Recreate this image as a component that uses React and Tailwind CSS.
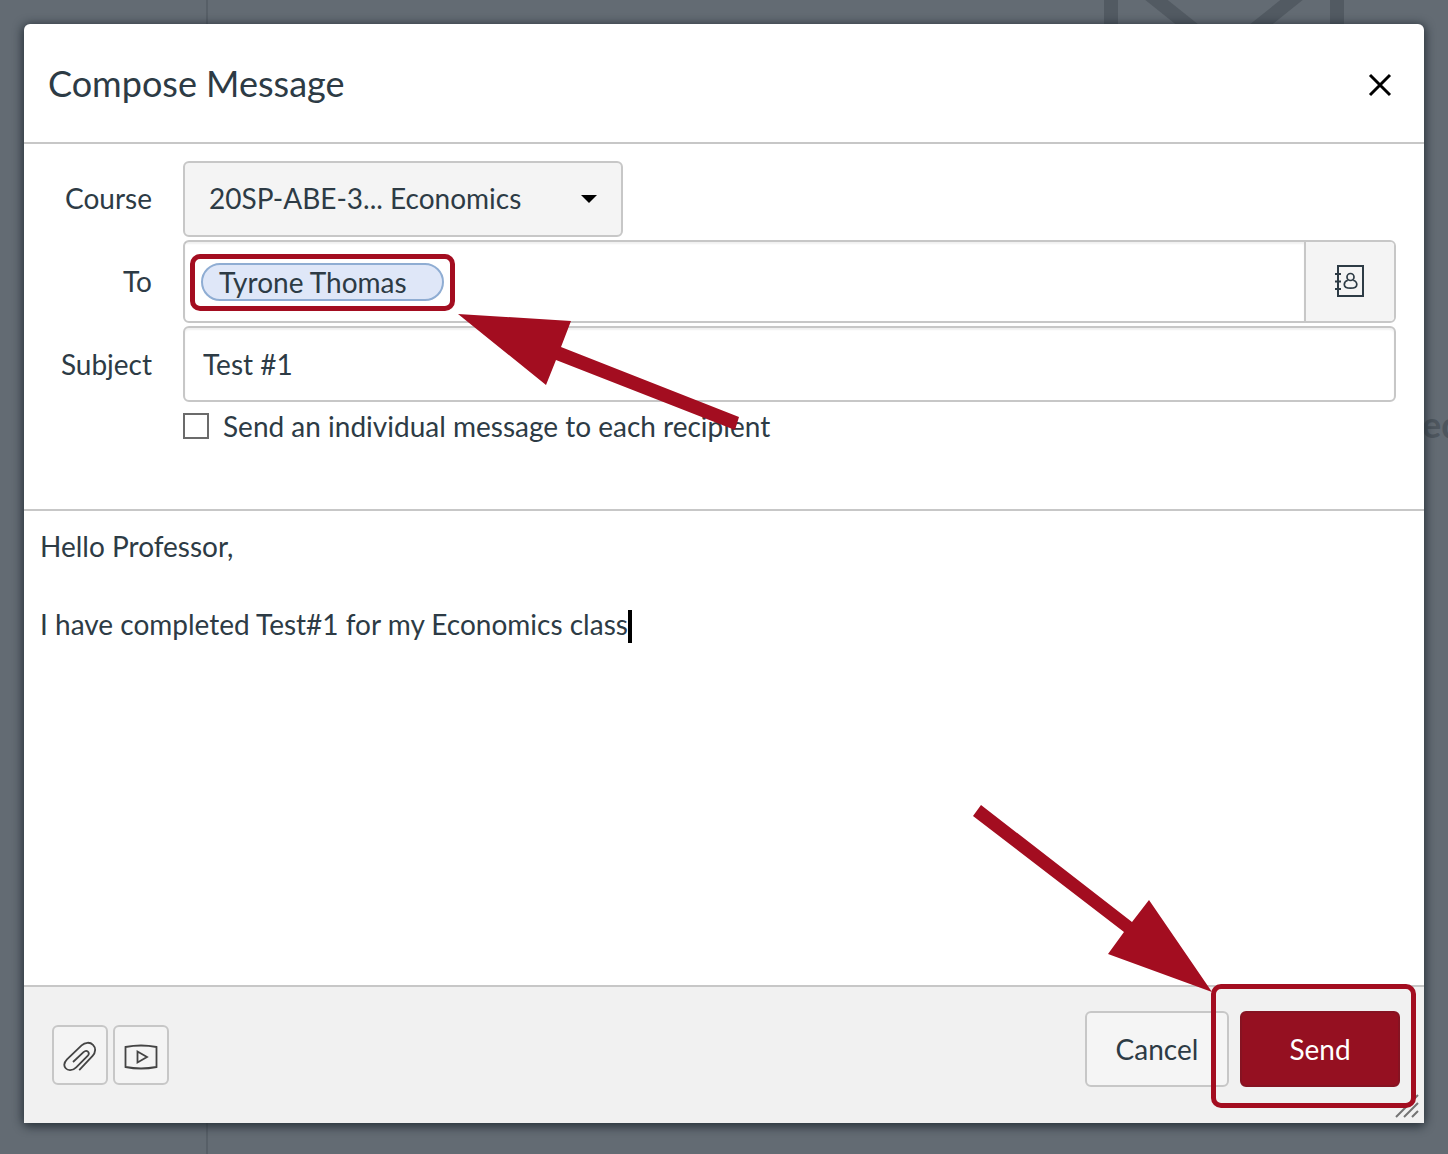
import { useState } from "react";

const ANNOTATION = "#a30d20";

// Faded inbox page behind the dialog
const InboxBackdrop = () => (
  <div className="absolute inset-0 overflow-hidden" aria-hidden="true">
    <div className="h-full w-52 border-r-2 border-[#575f67]" />
    <svg
      className="absolute top-0 right-[104px]"
      width="240"
      height="60"
      viewBox="0 0 240 60"
      fill="none"
      stroke="#525a62"
      strokeWidth="14"
    >
      <path d="M7 0V60M233 0V60" />
      <path d="M30 -18L100 38H140L210 -18" />
    </svg>
    <div className="absolute top-[406px] left-full -ml-[26px] text-[36px] leading-9 font-bold text-[#4e565e]">
      ed
    </div>
  </div>
);

const AddressBookIcon = () => (
  <svg width="30" height="34" viewBox="0 0 30 34" fill="none" stroke="#2d3b45">
    <rect x="3" y="1" width="25" height="30" strokeWidth="2" />
    <path d="M0 9H6M0 16.500H6M0 24H6" strokeWidth="2" />
    <circle cx="15.500" cy="12" r="3.500" strokeWidth="1.700" />
    <path
      d="M12.800 15.200C10.300 16 9.300 17.600 9.300 19.500C9.300 22 12 23.200 15.500 23.200S21.800 22 21.800 19.500C21.800 17.600 20.700 16 18.200 15.200"
      strokeWidth="1.700"
    />
  </svg>
);

const PaperclipIcon = () => (
  <svg width="34" height="32" viewBox="0 0 34 32" fill="none" stroke="#444" strokeWidth="1.800">
    <path d="M10 21L20.500 11.200C23.800 8.200 27.600 11.600 24.600 15L13.200 26.300C9.200 30.200 4.600 29.600 2.700 27.300C0.500 24.600 1.200 21.200 4 18.300L18.600 4.400C22 1.200 27 0.800 30 3.800C33 6.800 32.800 11.400 29.600 14.800L16.200 29.200" />
  </svg>
);

const MediaIcon = () => (
  <svg width="34" height="28" viewBox="0 0 34 28" fill="none" stroke="#444" strokeWidth="1.800">
    <path d="M1.500 4Q17 1 32.500 4V24Q17 27 1.500 24Z" />
    <path d="M13.500 8.500V19.500L23 14Z" />
  </svg>
);

const Compose = () => {
  const [course, setCourse] = useState("econ");
  const [to, setTo] = useState("");
  const [subject, setSubject] = useState("Test #1");
  const [individual, setIndividual] = useState(false);
  const [body, setBody] = useState(
    "Hello Professor,\n\nI have completed Test#1 for my Economics class"
  );

  return (
    <form
      role="dialog"
      aria-labelledby="compose-title"
      onSubmit={(e) => e.preventDefault()}
      className="relative flex flex-1 flex-col rounded-md bg-white shadow-[0_2px_10px_2px_rgba(20,30,38,0.7)]"
    >
      <header className="flex items-center justify-between border-b-2 border-[#c7c7c7] py-8 pr-8 pl-6">
        <h1 id="compose-title" className="text-[36px] leading-[54px]">
          Compose Message
        </h1>
        <button type="button" aria-label="Close" className="pt-1">
          <svg width="24" height="24" viewBox="0 0 24 24" stroke="#000" strokeWidth="3">
            <path d="M2 2L22 22M22 2L2 22" />
          </svg>
        </button>
      </header>

      <div className="grid grid-cols-[128px_1fr] items-center gap-x-[31px] gap-y-[3px] border-b-2 border-[#c7c7c7] pt-[17px] pr-7 pb-[65px]">
        <label htmlFor="course" className="pb-0.5 text-right">
          Course
        </label>
        <div className="grid w-[440px] items-center">
          <select
            id="course"
            value={course}
            onChange={(e) => setCourse(e.target.value)}
            className="col-start-1 row-start-1 h-[76px] appearance-none rounded-md border-2 border-[#c7c7c7] bg-[#f4f4f4] pr-14 pb-0.5 pl-6"
          >
            <option value="econ">20SP-ABE-3... Economics</option>
          </select>
          <svg
            className="pointer-events-none col-start-1 row-start-1 mr-[26px] justify-self-end"
            width="16"
            height="8"
            viewBox="0 0 16 8"
          >
            <path d="M0 0H16L8 8Z" />
          </svg>
        </div>

        <label htmlFor="to" className="pb-0.5 text-right">
          To
        </label>
        <div className="flex h-[83px] rounded-md border-2 border-[#c7c7c7]">
          <div className="flex flex-1 items-center gap-4 pl-4 inset-shadow-[0_2px_2px_rgba(0,0,0,0.06)]">
            <div className="relative">
              <div className="h-[38px] w-[243px] rounded-full border-2 border-[#8fadd3] bg-[#dfe7f8] pl-4 leading-[34px]">
                Tyrone Thomas
              </div>
              <div className="pointer-events-none absolute -inset-x-[11px] -top-[9px] -bottom-[10px] rounded-[10px] border-5 border-[#a30d20]" />
              <svg
                className="pointer-events-none absolute top-[51px] left-[257px] z-10"
                width="283"
                height="118"
                viewBox="0 0 283 118"
                fill={ANNOTATION}
              >
                <path d="M0 0L113 7L103 33L281 103L277 116L98 46L88 71Z" />
              </svg>
            </div>
            <input
              id="to"
              value={to}
              onChange={(e) => setTo(e.target.value)}
              className="h-full min-w-0 flex-1 outline-none"
            />
          </div>
          <button
            type="button"
            aria-label="Address book"
            className="flex w-[90px] items-center justify-center rounded-r-sm border-l-2 border-[#c7c7c7] bg-[#f4f4f4]"
          >
            <AddressBookIcon />
          </button>
        </div>

        <label htmlFor="subject" className="text-right">
          Subject
        </label>
        <input
          id="subject"
          value={subject}
          onChange={(e) => setSubject(e.target.value)}
          className="h-[76px] rounded-md border-2 border-[#c7c7c7] px-[18px] inset-shadow-[0_2px_2px_rgba(0,0,0,0.06)]"
        />

        <label className="col-start-2 flex items-center gap-[14px] pt-[3px]">
          <input
            type="checkbox"
            checked={individual}
            onChange={(e) => setIndividual(e.target.checked)}
            className="size-[26px] appearance-none border-2 border-[#6b6b6b] bg-white checked:bg-[#2d3b45]"
          />
          Send an individual message to each recipient
        </label>
      </div>

      <div className="relative flex min-h-60 flex-1">
        <textarea
          aria-label="Message"
          value={body}
          onChange={(e) => setBody(e.target.value)}
          className="flex-1 resize-none px-4 pt-4 leading-[39px] outline-none"
        />
        <span className="absolute top-[99px] left-[604px] h-[33px] w-1 bg-black" />
      </div>

      <footer className="flex items-start justify-between border-t-2 border-[#c7c7c7] bg-[#f1f1f1] pt-6 pr-6 pb-9 pl-7">
        <div className="flex gap-[5px] pt-[14px]">
          <button
            type="button"
            aria-label="Attach file"
            className="flex h-[60px] w-14 items-center justify-center rounded-md border-2 border-[#c7c7c7] bg-[#f4f4f4] pt-1"
          >
            <PaperclipIcon />
          </button>
          <button
            type="button"
            aria-label="Record media"
            className="flex h-[60px] w-14 items-center justify-center rounded-md border-2 border-[#c7c7c7] bg-[#f4f4f4] pt-1"
          >
            <MediaIcon />
          </button>
        </div>
        <div className="flex gap-[11px]">
          <button
            type="button"
            className="h-[76px] w-36 rounded-md border-2 border-[#c7c7c7] bg-[#f5f5f5]"
          >
            Cancel
          </button>
          <div className="relative">
            <button
              type="submit"
              className="h-[76px] w-40 rounded-md border-2 border-[#861322] bg-[#951021] text-white"
            >
              Send
            </button>
            <div className="pointer-events-none absolute -top-[27px] -right-4 -bottom-[21px] -left-[29px] z-10 rounded-[10px] border-5 border-[#a30d20]" />
            <svg
              className="pointer-events-none absolute -top-[206px] -left-[267px]"
              width="240"
              height="188"
              viewBox="0 0 240 188"
              fill={ANNOTATION}
            >
              <path d="M8 0L159 117L176 95L239 187L135 149L151 127L0 11Z" />
            </svg>
          </div>
        </div>
      </footer>

      <svg
        className="absolute right-[5px] bottom-[5px]"
        width="24"
        height="24"
        viewBox="0 0 24 24"
        stroke="#747474"
        strokeWidth="2"
      >
        <path d="M1 23L23 1M9 23L23 9M17 23L23 17" />
      </svg>
    </form>
  );
};

const App = () => (
  <div className="relative flex min-h-screen flex-col bg-[#636b73] px-6 pt-6 pb-[31px] font-['Lato',sans-serif] text-[28px] leading-9 text-[#2d3b45]">
    <InboxBackdrop />
    <Compose />
  </div>
);

export default App;
